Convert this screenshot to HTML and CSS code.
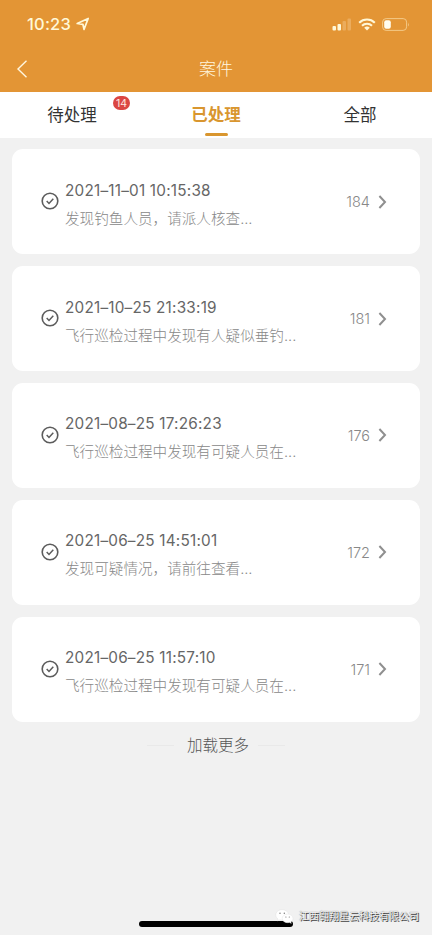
FILE: index.html
```html
<!DOCTYPE html>
<html lang="zh-CN">
<head>
    <meta charset="UTF-8">
    <meta name="viewport" content="width=device-width, initial-scale=1.0">
    <title>案件</title>
    <link rel="stylesheet" href="styles.css">
</head>
<body>
    <!-- Shared icons -->
    <svg class="sprite" width="0" height="0">
        <symbol id="check" viewBox="0 0 18 18">
            <circle cx="9" cy="9" r="7.8" fill="none" stroke="#5c5c5c" stroke-width="1.6"/>
            <path d="M5.7 9.1l2.3 2.4 4.3-4.7" fill="none" stroke="#5c5c5c" stroke-width="1.5"/>
        </symbol>
        <symbol id="arrow" viewBox="0 0 9 14">
            <path d="M1.4 1l5.6 6-5.6 6" fill="none" stroke="#8f8f8f" stroke-width="2"/>
        </symbol>
    </svg>

    <header class="header">
        <div class="status-bar">
            <span class="clock">10:23</span>
            <svg class="location" width="14" height="14" viewBox="0 0 14 14">
                <path d="M1.2 6.5L12.2 1.5 8 12.4 6.9 7.3z" fill="none" stroke="#fff8d8" stroke-width="1.7" stroke-linejoin="round"/>
            </svg>
            <svg class="signal" width="20" height="13" viewBox="0 0 20 13">
                <rect x="0.5" y="8" width="3.5" height="4.5" rx="1" fill="#fff8d8"/>
                <rect x="5.5" y="6" width="3.5" height="6.5" rx="1" fill="#fff8d8"/>
                <rect x="10.5" y="3" width="3.5" height="9.5" rx="1" fill="#ebac5d"/>
                <rect x="15.5" y="0.5" width="3.5" height="12" rx="1" fill="#ebac5d"/>
            </svg>
            <svg class="wifi" width="18" height="13" viewBox="0 0 18 13">
                <path d="M1.2 4.7a11.2 11.2 0 0 1 15.6 0M4 7.7a7.2 7.2 0 0 1 10 0" fill="none" stroke="#fff8d8" stroke-width="2.1"/>
                <path d="M9 12.6L6.2 9.8a4 4 0 0 1 5.6 0z" fill="#fff8d8"/>
            </svg>
            <svg class="battery" width="28" height="13" viewBox="0 0 28 13">
                <rect x="0.6" y="0.6" width="24" height="11.8" rx="3.5" fill="none" stroke="#f3c987" stroke-width="1"/>
                <rect x="2.2" y="2.2" width="6.6" height="8.6" rx="2" fill="#fffdf0"/>
                <path d="M26 4.4q1.6 2.1 0 4.2z" fill="#f3c987"/>
            </svg>
        </div>
        <div class="nav-bar">
            <svg class="back" width="12" height="18" viewBox="0 0 12 18">
                <path d="M10.5 0.8L2 9l8.5 8.2" fill="none" stroke="#fff6df" stroke-width="1.4"/>
            </svg>
            <h1>案件</h1>
        </div>
    </header>

    <nav class="tabs">
        <div class="tab">待处理<span class="badge">14</span></div>
        <div class="tab active">已处理</div>
        <div class="tab">全部</div>
    </nav>

    <main class="list">
        <div class="card">
            <svg class="check"><use href="#check"/></svg>
            <div class="info">
                <div class="time">2021–11–01 10:15:38</div>
                <div class="desc">发现钓鱼人员，请派人核查...</div>
            </div>
            <span class="number">184</span>
            <svg class="arrow"><use href="#arrow"/></svg>
        </div>
        <div class="card">
            <svg class="check"><use href="#check"/></svg>
            <div class="info">
                <div class="time">2021–10–25 21:33:19</div>
                <div class="desc">飞行巡检过程中发现有人疑似垂钓...</div>
            </div>
            <span class="number">181</span>
            <svg class="arrow"><use href="#arrow"/></svg>
        </div>
        <div class="card">
            <svg class="check"><use href="#check"/></svg>
            <div class="info">
                <div class="time">2021–08–25 17:26:23</div>
                <div class="desc">飞行巡检过程中发现有可疑人员在...</div>
            </div>
            <span class="number">176</span>
            <svg class="arrow"><use href="#arrow"/></svg>
        </div>
        <div class="card">
            <svg class="check"><use href="#check"/></svg>
            <div class="info">
                <div class="time">2021–06–25 14:51:01</div>
                <div class="desc">发现可疑情况，请前往查看...</div>
            </div>
            <span class="number">172</span>
            <svg class="arrow"><use href="#arrow"/></svg>
        </div>
        <div class="card">
            <svg class="check"><use href="#check"/></svg>
            <div class="info">
                <div class="time">2021–06–25 11:57:10</div>
                <div class="desc">飞行巡检过程中发现有可疑人员在...</div>
            </div>
            <span class="number">171</span>
            <svg class="arrow"><use href="#arrow"/></svg>
        </div>
        <div class="load-more"><span>加载更多</span></div>
    </main>

    <div class="home-bar"></div>

    <div class="watermark">
        <svg width="19" height="15" viewBox="0 0 19 15">
            <path d="M7.2 0.7C3.5 0.7 0.8 3 0.8 5.9c0 1.7 0.9 3.1 2.3 4.1l-0.5 2 2.3-1.2c0.7 0.2 1.5 0.3 2.3 0.3 3.6 0 6.4-2.3 6.4-5.2S10.8 0.7 7.2 0.7z" fill="#fff" stroke="#ddd" stroke-width="0.4"/>
            <path d="M12.6 5.1c-3 0-5.4 1.9-5.4 4.3s2.4 4.3 5.4 4.3c0.7 0 1.3-0.1 1.9-0.3l1.8 1-0.4-1.6c1.3-0.8 2.1-2 2.1-3.4 0-2.4-2.4-4.3-5.4-4.3z" fill="#fff" stroke="#ddd" stroke-width="0.4"/>
            <g fill="#777">
                <circle cx="5" cy="4.2" r="0.7"/>
                <circle cx="9.3" cy="4.2" r="0.7"/>
                <circle cx="10.9" cy="8" r="0.6"/>
                <circle cx="14.3" cy="8" r="0.6"/>
            </g>
        </svg>
        <span>江西翱翔星云科技有限公司</span>
    </div>
</body>
</html>
```

FILE: styles.css
```css
* {
    box-sizing: border-box;
}
body {
    position: relative;
    height: 935px;
    margin: 0;
    overflow: hidden;
    background-color: #f1f1f1;
    font-family: Inter, "Noto Sans CJK SC", sans-serif;
}
svg {
    display: block;
    flex: none;
}
.sprite {
    position: absolute;
}
.header {
    height: 92px;
    background-color: #e39535;
}
.status-bar {
    display: flex;
    align-items: center;
    height: 46px;
    padding: 2px 22px 0 27px;
    color: #fff8d8;
}
.clock {
    font-size: 16.5px;
    font-weight: 500;
    letter-spacing: 0.2px;
}
.location {
    margin-left: 5px;
}
.signal {
    margin-left: auto;
}
.wifi {
    margin: 0 6px;
}
.nav-bar {
    display: grid;
    grid-template-columns: 1fr auto 1fr;
    align-items: center;
    height: 46px;
    padding: 0 16px;
}
.nav-bar h1 {
    margin: 0;
    padding-top: 1px;
    color: #fff6df;
    font-size: 17px;
    font-weight: 300;
    line-height: 45px;
}
.tabs {
    display: flex;
    height: 46px;
    background-color: #fff;
}
.tab {
    position: relative;
    flex: 1;
    color: #333;
    font-size: 16.5px;
    line-height: 46px;
    text-align: center;
}
.tab.active {
    color: #d9962f;
    font-weight: 700;
}
/* Underline of the selected tab */
.tab.active::after {
    content: "";
    position: absolute;
    bottom: 2px;
    left: 50%;
    width: 23px;
    height: 3px;
    margin-left: -11.5px;
    border-radius: 2px;
    background-color: #d9962f;
}
.badge {
    position: absolute;
    top: 4px;
    left: 113px;
    width: 17px;
    height: 14px;
    border-radius: 7px;
    background-color: #db4643;
    color: #ffe8e0;
    font-size: 10.5px;
    line-height: 15px;
}
.list {
    display: flex;
    flex-direction: column;
    gap: 11.8px;
    padding: 11.4px 12px;
}
.card {
    display: flex;
    align-items: center;
    height: 105px;
    padding: 0 33px 0 29px;
    border-radius: 11px;
    background-color: #fff;
}
.check {
    width: 18px;
    height: 18px;
    margin: -1px 6px 0 0;
}
.info {
    flex: 1;
    padding-top: 7px;
    white-space: nowrap;
}
.time {
    color: #666;
    font-size: 15.3px;
    font-weight: 400;
    line-height: 28px;
    letter-spacing: 0.22px;
}
.desc {
    color: #888;
    font-size: 14.6px;
    font-weight: 300;
    line-height: 29px;
}
.number {
    margin-right: 8px;
    color: #888;
    font-size: 14.5px;
    font-weight: 300;
}
.arrow {
    width: 9px;
    height: 14px;
}
.load-more {
    display: flex;
    align-items: center;
    justify-content: center;
    gap: 9px;
    color: #555;
    font-size: 15.5px;
    font-weight: 300;
    line-height: 24px;
}
.load-more span {
    padding: 1px 0 0 4px;
}
.load-more::before,
.load-more::after {
    content: "";
    width: 27px;
    height: 1px;
    background-color: #e9e9e9;
}
.home-bar {
    position: absolute;
    bottom: 8px;
    left: 139px;
    width: 154px;
    height: 6px;
    border-radius: 3px;
    background-color: #000;
}
.watermark {
    position: absolute;
    right: 13px;
    bottom: 9px;
    display: flex;
    align-items: center;
    gap: 5px;
    color: #f4f4f4;
    font-size: 10px;
    line-height: 20px;
    text-shadow: 1px 1px 0 #444, 0 0 1px #555;
}
```
